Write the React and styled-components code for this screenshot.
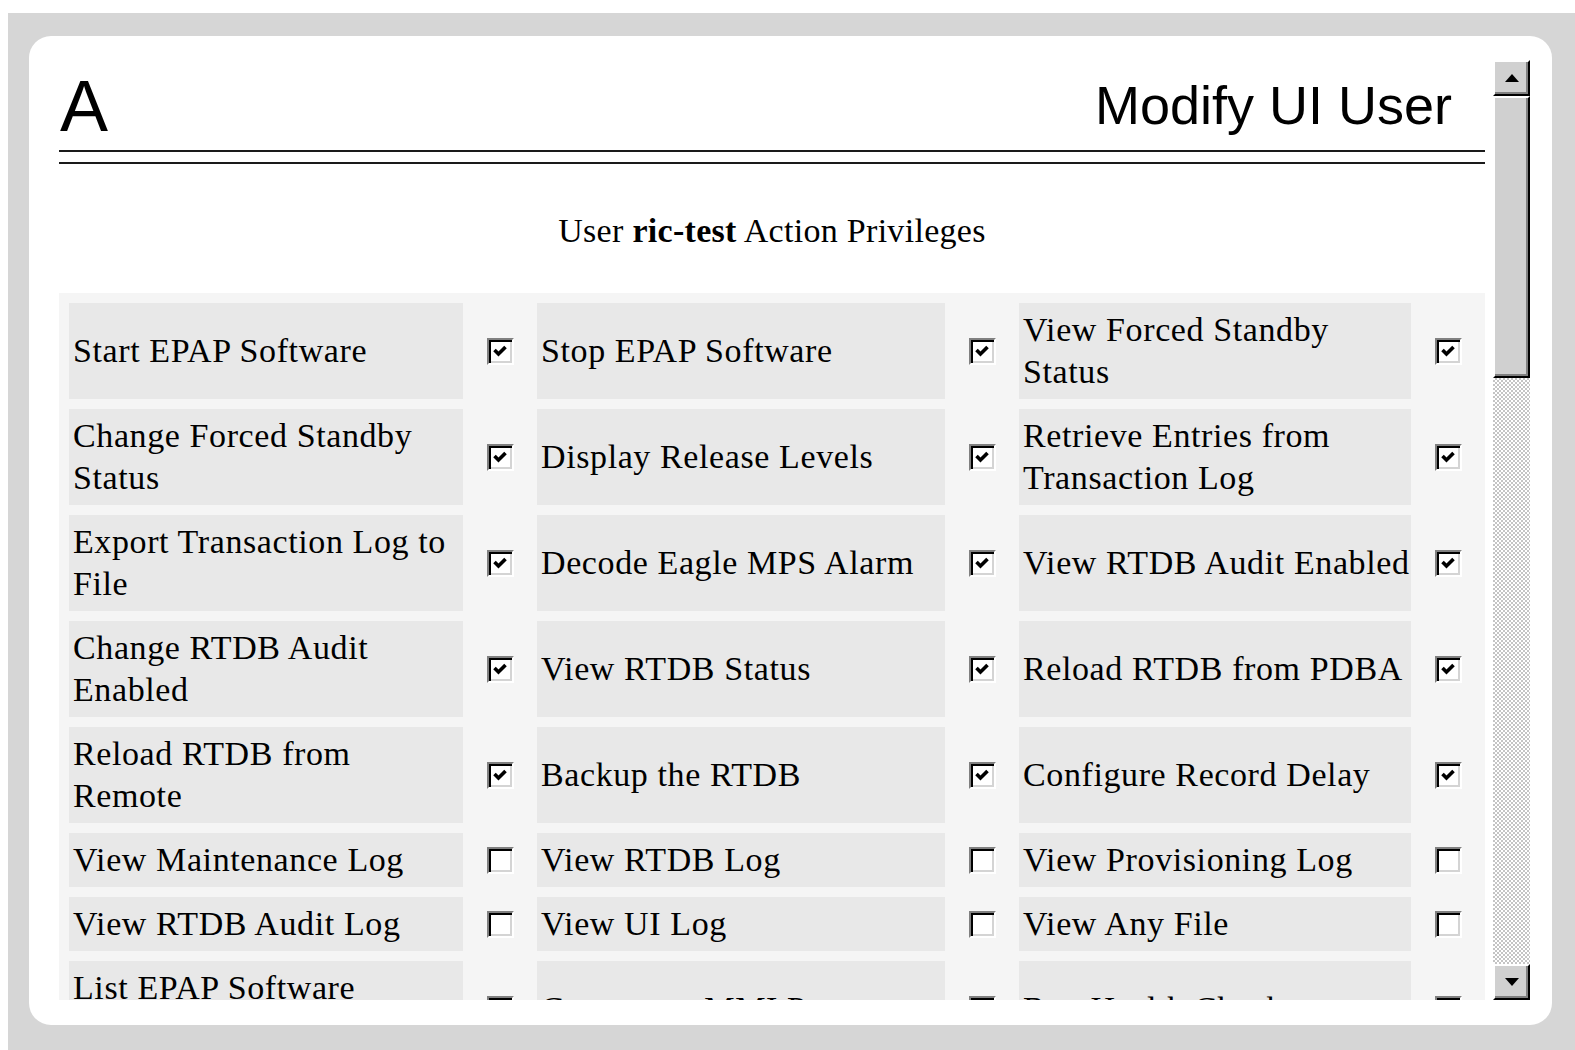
import React from "react";
import styled, { createGlobalStyle } from "styled-components";

const GlobalStyle = createGlobalStyle`
  html, body {
    margin: 0;
    padding: 0;
    background: #fff;
  }
  body {
    width: 1575px;
    height: 1050px;
    overflow: hidden;
    font-family: "Liberation Serif", "Times New Roman", serif;
  }
`;

// rows of three privileges, each label split into its display lines
const rows = [
  [
    { lines: ["Start EPAP Software"], checked: true },
    { lines: ["Stop EPAP Software"], checked: true },
    { lines: ["View Forced Standby", "Status"], checked: true },
  ],
  [
    { lines: ["Change Forced Standby", "Status"], checked: true },
    { lines: ["Display Release Levels"], checked: true },
    { lines: ["Retrieve Entries from", "Transaction Log"], checked: true },
  ],
  [
    { lines: ["Export Transaction Log to", "File"], checked: true },
    { lines: ["Decode Eagle MPS Alarm"], checked: true },
    { lines: ["View RTDB Audit Enabled"], checked: true },
  ],
  [
    { lines: ["Change RTDB Audit", "Enabled"], checked: true },
    { lines: ["View RTDB Status"], checked: true },
    { lines: ["Reload RTDB from PDBA"], checked: true },
  ],
  [
    { lines: ["Reload RTDB from", "Remote"], checked: true },
    { lines: ["Backup the RTDB"], checked: true },
    { lines: ["Configure Record Delay"], checked: true },
  ],
  [
    { lines: ["View Maintenance Log"], checked: false },
    { lines: ["View RTDB Log"], checked: false },
    { lines: ["View Provisioning Log"], checked: false },
  ],
  [
    { lines: ["View RTDB Audit Log"], checked: false },
    { lines: ["View UI Log"], checked: false },
    { lines: ["View Any File"], checked: false },
  ],
  [
    { lines: ["List EPAP Software", "Versions"], checked: false },
    { lines: ["Connect to MMI Port"], checked: false },
    { lines: ["Run Health Check"], checked: false },
  ],
];

const App = () => {
  return (
    <>
      <GlobalStyle />
      <Page>
        <Card>
          <Frame>
            <Content>
              <Header>
                <Logo>A</Logo>
                <PageTitle>Modify UI User</PageTitle>
              </Header>
              <DoubleRule />
              <Subtitle>
                User <b>ric-test</b> Action Privileges
              </Subtitle>
              <PrivilegeGrid>
                {rows.map((row, r) =>
                  row.map((item, c) => (
                    <React.Fragment key={`${r}-${c}`}>
                      <Label>
                        <span>
                          {item.lines.map((line, i) => (
                            <React.Fragment key={i}>
                              {i > 0 && <br />}
                              {line}
                            </React.Fragment>
                          ))}
                        </span>
                      </Label>
                      <CheckCell>
                        <Checkbox>
                          {item.checked && (
                            <svg width="16" height="16" viewBox="0 0 16 16">
                              <path
                                d="M2.5 7 L6.5 11 L13.5 4"
                                fill="none"
                                stroke="#000"
                                strokeWidth="3.6"
                                strokeLinecap="butt"
                                strokeLinejoin="miter"
                              />
                            </svg>
                          )}
                        </Checkbox>
                      </CheckCell>
                    </React.Fragment>
                  ))
                )}
              </PrivilegeGrid>
            </Content>
            <Scrollbar>
              <ScrollButton>
                <svg width="14" height="8" viewBox="0 0 14 8">
                  <path d="M7 0 L14 8 L0 8 Z" fill="#000" />
                </svg>
              </ScrollButton>
              <Thumb />
              <Track />
              <ScrollButton>
                <svg width="14" height="8" viewBox="0 0 14 8">
                  <path d="M0 0 L14 0 L7 8 Z" fill="#000" />
                </svg>
              </ScrollButton>
            </Scrollbar>
          </Frame>
        </Card>
      </Page>
    </>
  );
};

// Styled Components
const Page = styled.div`
  margin: 13px 0 0 8px;
  height: 1037px;
  box-sizing: border-box;
  padding: 23px 23px 25px 21px;
  background-color: #d6d6d6;
`;

const Card = styled.div`
  height: 100%;
  box-sizing: border-box;
  padding: 24px 22px 25px 30px;
  background-color: #fff;
  border-radius: 22px;
`;

const Frame = styled.div`
  display: flex;
  gap: 8px;
  height: 100%;
`;

const Content = styled.div`
  flex: 1;
  min-width: 0;
  overflow: hidden;
  padding-top: 10px;
`;

const Header = styled.div`
  display: flex;
  justify-content: space-between;
  align-items: flex-end;
  padding: 0 33px 0 1px;
  font-family: "Liberation Sans", Arial, sans-serif;
  color: #000;
`;

const Logo = styled.div`
  font-size: 72px;
  line-height: 1;
`;

const PageTitle = styled.h1`
  margin: 0 0 10px;
  font-size: 54px;
  font-weight: normal;
  line-height: 1;
`;

const DoubleRule = styled.div`
  margin-top: 8px;
  height: 10px;
  border-top: 2px solid #1a1a1a;
  border-bottom: 2px solid #1a1a1a;
`;

const Subtitle = styled.p`
  margin: 46px 0 42px;
  text-align: center;
  font-size: 34px;
  line-height: 41px;
  letter-spacing: 0.3px;
  color: #000;
`;

const PrivilegeGrid = styled.div`
  display: grid;
  grid-template-columns: 394px 54px 408px 54px 392px 54px;
  gap: 10px;
  padding: 10px;
  background-color: #f5f5f5;
`;

const Label = styled.div`
  display: flex;
  align-items: center;
  padding: 6px 4px;
  background-color: #e8e8e8;
  font-size: 34px;
  line-height: 42px;
  letter-spacing: 0.6px;
  white-space: nowrap;
  color: #000;
`;

const CheckCell = styled.div`
  display: flex;
  align-items: center;
  justify-content: center;
`;

const Checkbox = styled.span`
  display: flex;
  align-items: center;
  justify-content: center;
  width: 27px;
  height: 27px;
  box-sizing: border-box;
  background-color: #fff;
  border: 2px solid;
  border-color: #808080 #ffffff #ffffff #808080;
  box-shadow: inset 2px 2px 0 #000, inset -2px -2px 0 #d4d4d4;
`;

const Scrollbar = styled.div`
  display: flex;
  flex-direction: column;
  width: 37px;
`;

const bevel = `
  box-sizing: border-box;
  background-color: #d0d0d0;
  border: 2px solid;
  border-color: #fff #000 #000 #fff;
  box-shadow: inset -2px -2px 0 #808080;
`;

const ScrollButton = styled.div`
  ${bevel}
  display: flex;
  align-items: center;
  justify-content: center;
  height: 36px;
`;

const Thumb = styled.div`
  ${bevel}
  height: 282px;
`;

const Track = styled.div`
  flex: 1;
  background-color: #fff;
  background-image: repeating-conic-gradient(#c4c4c4 0 25%, #fff 0 50%);
  background-size: 4px 4px;
`;

export default App;
